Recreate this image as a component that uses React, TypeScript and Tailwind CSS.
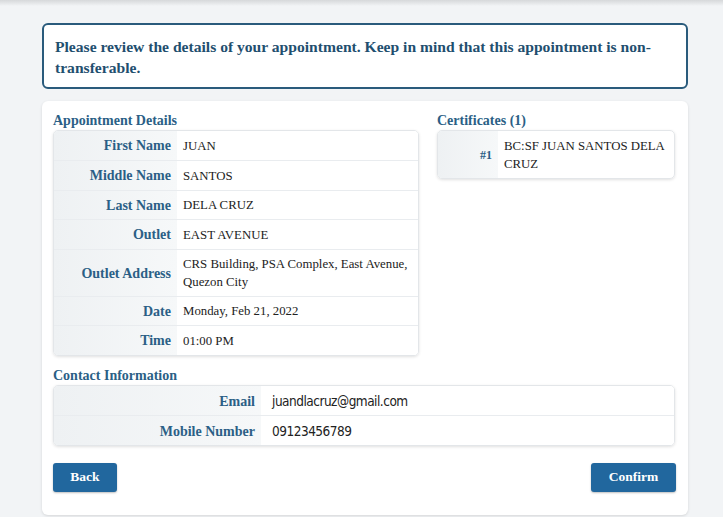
import React from "react";

const serif = { fontFamily: '"Liberation Serif", "DejaVu Serif", serif' };
const narrow = { fontFamily: '"Liberation Sans Narrow", "DejaVu Sans Condensed", "Liberation Sans", sans-serif' };

function Row({
  label,
  children,
  h,
  labelW,
  last,
  valueClass = "",
}: {
  label: string;
  children: React.ReactNode;
  h: string;
  labelW: string;
  last?: boolean;
  valueClass?: string;
}) {
  return (
    <div className={`flex ${h} ${last ? "" : "border-b border-[#e9ecef]"}`}>
      <div
        className={`${labelW} shrink-0 flex items-center justify-end pr-[6px] bg-gradient-to-r from-[#eef1f3] to-[#f6f8f9] text-[#2b5f86] font-bold text-[14px]`}
      >
        {label}
      </div>
      <div className={`flex-1 flex items-center pl-[6px] pr-[8px] bg-white text-[#222] text-[12.8px] leading-[18px] ${valueClass}`}>
        {children}
      </div>
    </div>
  );
}

export default function App() {
  return (
    <div className="relative min-h-[517px] w-[723px] bg-[#f2f4f6] overflow-hidden" style={serif}>
      <div className="absolute left-0 right-0 top-0 h-[6px] bg-gradient-to-b from-[#d6d8da] to-[#f2f4f6]" />
      <div className="ml-[42px] w-[646px] pt-[23px]">
        <div className="h-[66px] rounded-[6px] border-2 border-[#2a5b7c] bg-white px-[11px] pt-[11px]">
          <p className="text-[15.6px] font-bold leading-[21px] text-[#1f4f6f]">
            Please review the details of your appointment. Keep in mind that this appointment is non-transferable.
          </p>
        </div>

        <div className="mt-[12px] h-[414px] rounded-[6px] bg-white px-[11px] pt-[11px] shadow-[0_1px_3px_rgba(0,0,0,0.12)]">
          <div className="flex">
            <div className="w-[366px]">
              <div className="text-[14px] font-bold leading-[17px] text-[#2b5f86]">Appointment Details</div>
              <div className="mt-[1px] overflow-hidden rounded-[5px] border border-[#e3e6e9] shadow-[0_1px_3px_rgba(0,0,0,0.12)]">
                <Row label="First Name" h="h-[30px]" labelW="w-[123px]">JUAN</Row>
                <Row label="Middle Name" h="h-[30px]" labelW="w-[123px]">SANTOS</Row>
                <Row label="Last Name" h="h-[29px]" labelW="w-[123px]">DELA CRUZ</Row>
                <Row label="Outlet" h="h-[30px]" labelW="w-[123px]">EAST AVENUE</Row>
                <Row label="Outlet Address" h="h-[47px]" labelW="w-[123px]">
                  CRS Building, PSA Complex, East Avenue, Quezon City
                </Row>
                <Row label="Date" h="h-[29px]" labelW="w-[123px]">Monday, Feb 21, 2022</Row>
                <Row label="Time" h="h-[29px]" labelW="w-[123px]" last>01:00 PM</Row>
              </div>
            </div>
            <div className="ml-[18px] w-[238px]">
              <div className="text-[14px] font-bold leading-[17px] text-[#2b5f86]">Certificates (1)</div>
              <div className="mt-[1px] overflow-hidden rounded-[5px] border border-[#e3e6e9] shadow-[0_1px_3px_rgba(0,0,0,0.12)]">
                <div className="flex h-[47px]">
                  <div className="w-[60px] shrink-0 flex items-center justify-end pr-[6px] bg-gradient-to-r from-[#eef1f3] to-[#f6f8f9] text-[#2b5f86] font-bold text-[12px]">
                    #1
                  </div>
                  <div className="flex-1 flex items-center pl-[6px] pr-[6px] text-[12.8px] leading-[18px] text-[#222]">
                    BC:SF JUAN SANTOS DELA CRUZ
                  </div>
                </div>
              </div>
            </div>
          </div>

          <div className="mt-[11px] text-[14px] font-bold leading-[17px] text-[#2b5f86]">Contact Information</div>
          <div className="mt-[1px] w-[622px] overflow-hidden rounded-[5px] border border-[#e3e6e9] shadow-[0_1px_3px_rgba(0,0,0,0.12)]">
            <Row
              label="Email"
              h="h-[30px]"
              labelW="w-[207px] !items-start pt-[5px]"
              valueClass="!pl-[11px] !text-[13.5px] tracking-[-0.5px]"
            >
              <span style={narrow}>juandlacruz@gmail.com</span>
            </Row>
            <Row
              label="Mobile Number"
              h="h-[29px]"
              labelW="w-[207px] !items-start pt-[5px]"
              valueClass="!pl-[11px] !text-[13.5px] tracking-[-0.5px]"
              last
            >
              <span style={narrow}>09123456789</span>
            </Row>
          </div>

          <div className="mt-[17px] flex justify-between w-[623px]">
            <button className="h-[29px] w-[64px] rounded-[3px] bg-[#21679e] text-[13.5px] font-bold text-white shadow-[0_1px_2px_rgba(0,0,0,0.25)]">
              Back
            </button>
            <button className="h-[29px] w-[85px] rounded-[3px] bg-[#21679e] text-[13.5px] font-bold text-white shadow-[0_1px_2px_rgba(0,0,0,0.25)]">
              Confirm
            </button>
          </div>
        </div>
      </div>
    </div>
  );
}
